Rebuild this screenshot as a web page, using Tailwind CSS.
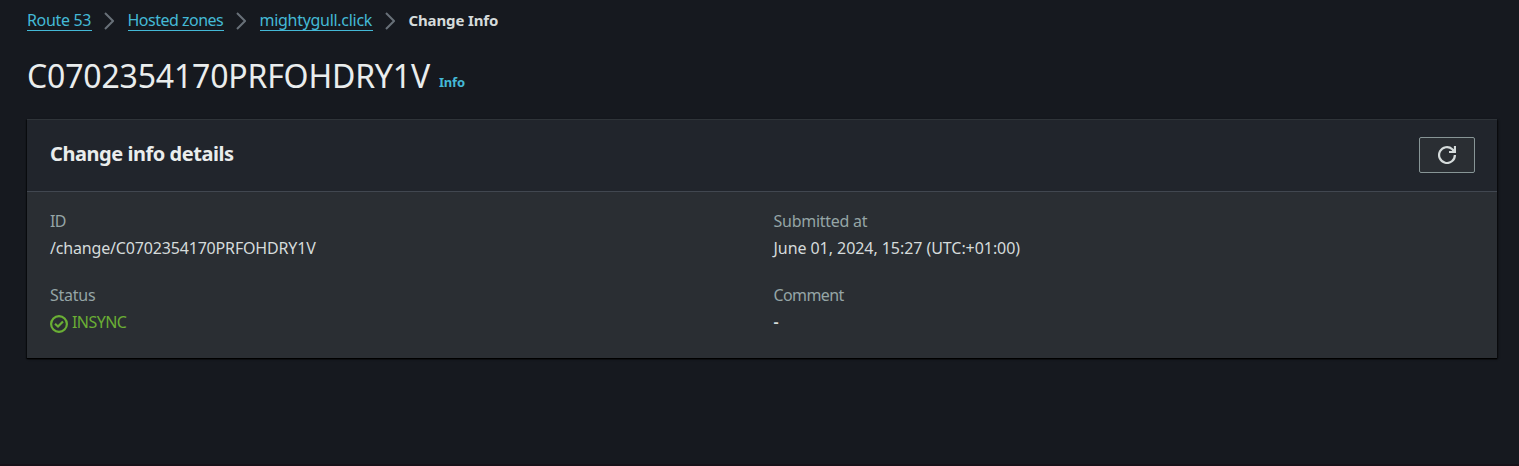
<!DOCTYPE html>
<html lang="en">
<head>
<meta charset="utf-8">
<title>Change Info</title>
<script src="https://cdn.jsdelivr.net/npm/@tailwindcss/browser@4"></script>
</head>
<body class="h-screen overflow-hidden border-b-2 border-[#161219] bg-[#16191f] pr-[22px] pl-[27px] font-['Noto_Sans',sans-serif] text-[#d5dbdb]">
  <nav class="flex h-[41px] items-center text-[16px] leading-[18px] whitespace-nowrap">
    <a href="#" class="h-[20px] w-[64.500px] border-b border-[#44b9d6] tracking-[-0.35px] text-[#44b9d6]">Route 53</a>
    <svg class="mr-[13.5px] ml-[12.5px] mt-px h-[18px] w-[10px]" viewBox="0 0 10 18" fill="none" stroke="#687078" stroke-width="2"><path d="M1 1 9 9 1 17"/></svg>
    <a href="#" class="h-[20px] w-[96px] border-b border-[#44b9d6] tracking-[-0.5px] text-[#44b9d6]">Hosted zones</a>
    <svg class="mr-[13.5px] ml-[12.5px] mt-px h-[18px] w-[10px]" viewBox="0 0 10 18" fill="none" stroke="#687078" stroke-width="2"><path d="M1 1 9 9 1 17"/></svg>
    <a href="#" class="h-[20px] w-[113px] border-b border-[#44b9d6] tracking-[-0.29px] text-[#44b9d6]">mightygull.click</a>
    <svg class="mr-[13.5px] ml-[12.5px] mt-px h-[18px] w-[10px]" viewBox="0 0 10 18" fill="none" stroke="#687078" stroke-width="2"><path d="M1 1 9 9 1 17"/></svg>
    <span class="h-[20px] text-[15px] font-bold tracking-[-0.13px]">Change Info</span>
  </nav>
  <div class="flex h-[78px] items-baseline pt-[14px] whitespace-nowrap">
    <h1 class="w-[412px] text-[32px] leading-[42px] tracking-[-0.18px] text-[#eaeded]">C0702354170PRFOHDRY1V</h1>
    <a href="#" class="-translate-y-px text-[13px] font-bold tracking-[-0.2px] text-[#44b9d6]">Info</a>
  </div>
  <section class="h-[239px] border-t border-[#2f3439] bg-[#2a2e33] shadow-[0_1px_1px_0_#000,1px_1px_2px_0_rgba(0,0,0,0.7),-1px_1px_1px_0_rgba(0,0,0,0.4)]">
    <header class="flex h-[72px] items-center justify-between border-b border-[#414750] bg-[#21252c] pr-[22px] pb-px pl-[23px]">
      <h2 class="pb-[3px] text-[20px] leading-6 font-bold tracking-[-0.45px] whitespace-nowrap text-[#eaeded]">Change info details</h2>
      <button class="flex h-[36px] w-[56px] items-center justify-center rounded-[2px] border border-[#879596] bg-[#2a2e33]" aria-label="Refresh">
        <svg class="h-[18px] w-[18px]" viewBox="0 0 18 18" fill="none" stroke="#d5dbdb" stroke-width="2.200"><path d="M16.900 9A7.900 7.900 0 1 1 14.300 3.200L16 5"/><path d="M17 0V6H11"/><path d="M17 2V6H13Z" fill="#d5dbdb" stroke="none"/></svg>
      </button>
    </header>
    <dl class="grid grid-cols-[723.5px_1fr] gap-y-[20px] pt-[16px] pl-[23px] text-[16px] leading-[27px] whitespace-nowrap">
      <div><dt class="tracking-[-0.6px] text-[#95a5a6]">ID</dt><dd class="tracking-[-0.17px]">/change/C0702354170PRFOHDRY1V</dd></div>
      <div><dt class="tracking-[-0.27px] text-[#95a5a6]">Submitted at</dt><dd class="tracking-[-0.06px]">June 01, 2024, 15:27 (UTC:+01:00)</dd></div>
      <div><dt class="tracking-[-0.25px] text-[#95a5a6]">Status</dt><dd class="flex items-center gap-[4px] tracking-[-0.55px] text-[#6aaf35]"><svg class="mt-[2px] h-[18px] w-[18px]" viewBox="0 0 18 18" fill="none" stroke="currentColor" stroke-width="2.200"><circle cx="9" cy="9" r="7.900"/><path d="m5 8.800 3 2.700 5-5"/></svg>INSYNC</dd></div>
      <div><dt class="tracking-[-0.6px] text-[#95a5a6]">Comment</dt><dd class="font-semibold">-</dd></div>
    </dl>
  </section>
</body>
</html>
